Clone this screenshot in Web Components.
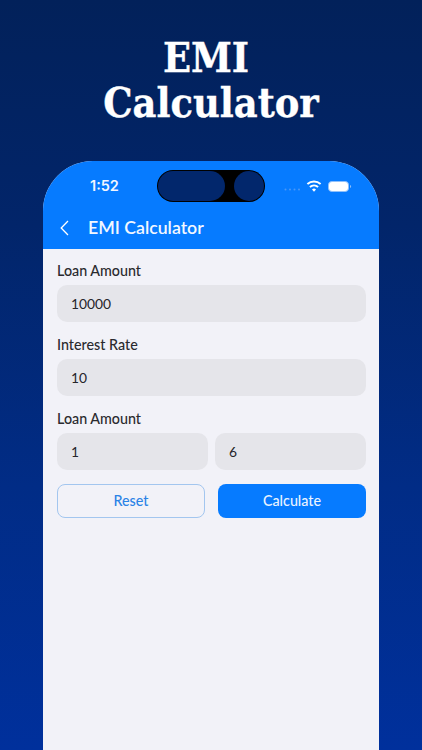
<!DOCTYPE html>
<html lang="en">
<head>
<meta charset="utf-8">
<title>EMI Calculator</title>
<style>
html,body{margin:0;height:750px;overflow:hidden}
body{background:linear-gradient(180deg,#02215a 0%,#02256a 30%,#012c86 65%,#00309c 100%);font-family:Lato,"Noto Sans",sans-serif}
</style>
</head>
<body>
<promo-screen>
  <promo-title slot="title"><span style="margin-right:10px">EMI</span><br>Calculator</promo-title>
  <phone-frame slot="phone">
    <status-bar slot="status" time="1:52"></status-bar>
    <nav-bar slot="nav">EMI Calculator</nav-bar>
    <form-field label="Loan Amount"><text-box>10000</text-box></form-field>
    <form-field label="Interest Rate"><text-box>10</text-box></form-field>
    <form-field label="Loan Amount" split><text-box>1</text-box><text-box>6</text-box></form-field>
    <button-row>
      <app-button variant="outline">Reset</app-button>
      <app-button variant="solid">Calculate</app-button>
    </button-row>
  </phone-frame>
</promo-screen>
<script>
function def(name, html, init){
  customElements.define(name, class extends HTMLElement{
    constructor(){super();this.attachShadow({mode:'open'}).innerHTML=html;}
    connectedCallback(){if(init)init(this);}
  });
}
def('promo-screen',`<style>:host{display:flex;flex-direction:column;height:750px;overflow:hidden}</style><slot name="title"></slot><slot name="phone"></slot>`);
def('promo-title',`<style>:host{display:block;flex:none;box-sizing:border-box;height:161px;padding-top:36px;text-align:center;color:#fff;font:700 41px/44.5px "DejaVu Serif Condensed","DejaVu Serif",serif;-webkit-text-stroke:.35px #fff}</style><slot></slot>`);
def('phone-frame',`<style>
:host{display:flex;flex-direction:column;margin:0 43px;height:620px;flex:none;background:#f2f2f8;border-radius:50px 50px 0 0;overflow:hidden}
.top{background:#067bff;height:88px;display:flex;flex-direction:column;flex:none}
.body{display:flex;flex-direction:column;padding:12px 13px 0 14px}
</style><div class="top"><slot name="status"></slot><slot name="nav"></slot></div><div class="body"><slot></slot></div>`);
def('status-bar',`<style>
:host{display:flex;align-items:center;height:32px;margin-top:9px;padding:0 27px 0 47px;color:#f2f6ff;flex:none}
.t{font:600 14.5px/1 Inter,"Noto Sans",sans-serif;width:67px}
.island{width:108px;height:32px;box-sizing:border-box;background:#000;border-radius:16px;display:flex;justify-content:space-between;padding:1px;border:0}
.island i{display:block;height:30px;background:#02276c;border-radius:15px}
.island i:first-child{width:67px}.island i:last-child{width:30px}
.r{margin-left:auto;display:flex;align-items:center}
</style>
<span class="t"></span>
<div class="island"><i></i><i></i></div>
<div class="r"><svg width="68" height="14" viewBox="0 0 68 14">
<g fill="#4a98f8"><circle cx="1.5" cy="10.5" r="1"/><circle cx="6" cy="10.5" r="1"/><circle cx="10.5" cy="10.5" r="1"/><circle cx="15" cy="10.5" r="1"/></g>
<g fill="none" stroke="#fff" stroke-width="1.9"><path d="M23.4 5a9.8 9.8 0 0 1 13.2 0"/><path d="M25.9 8a6.2 6.2 0 0 1 8.2 0"/></g>
<path d="M28 10.4a3 3 0 0 1 4 0L30 12.8z" fill="#fff"/>
<rect x="44.5" y="2.5" width="20" height="10" rx="3.4" fill="#fff" stroke="#8fc0fb"/>
<path d="M66 6v3a1.6 1.6 0 0 0 0-3z" fill="#8fc0fb"/>
</svg></div>`,el=>{el.shadowRoot.querySelector('.t').textContent=el.getAttribute('time');});
def('nav-bar',`<style>
:host{display:flex;align-items:center;height:38px;margin-top:7px;padding-left:17px;color:#f2f7ff;font:600 17.7px/1 Lato,"Noto Sans",sans-serif;flex:none}
svg{margin-right:19px;flex:none}
</style><svg width="9" height="16" viewBox="0 0 9 16"><path d="M8 1 1.2 8 8 15" fill="none" stroke="#fff" stroke-width="1.3"/></svg><slot></slot>`);
def('form-field',`<style>
:host{display:block;margin-bottom:13px}
.l{display:block;padding-top:1px;font:500 14.3px/17px Lato,"Noto Sans",sans-serif;color:#2a2a2e;margin-bottom:6px}
.c{display:flex;gap:7px}
</style><span class="l"></span><div class="c"><slot></slot></div>`,el=>{el.shadowRoot.querySelector('.l').textContent=el.getAttribute('label');});
def('text-box',`<style>
:host{display:flex;align-items:center;flex:1 1 0;height:37px;box-sizing:border-box;padding-left:14px;background:#e5e5ea;border-radius:10px;color:#26262a;font:400 13.8px/1 Lato,"Noto Sans",sans-serif}
</style><slot></slot>`);
def('button-row',`<style>:host{display:grid;grid-template-columns:1fr 1fr;gap:13px;margin-top:1px}</style><slot></slot>`);
def('app-button',`<style>
:host{display:flex;align-items:center;justify-content:center;min-width:0;height:34px;box-sizing:border-box;border-radius:8px;font:500 14.3px/1 Lato,"Noto Sans",sans-serif}
:host([variant=outline]){border:1px solid #a3c6ef;color:#2b83e6}
:host([variant=solid]){background:#067bff;color:#eaf3ff}
</style><slot></slot>`);
</script>
</body>
</html>
